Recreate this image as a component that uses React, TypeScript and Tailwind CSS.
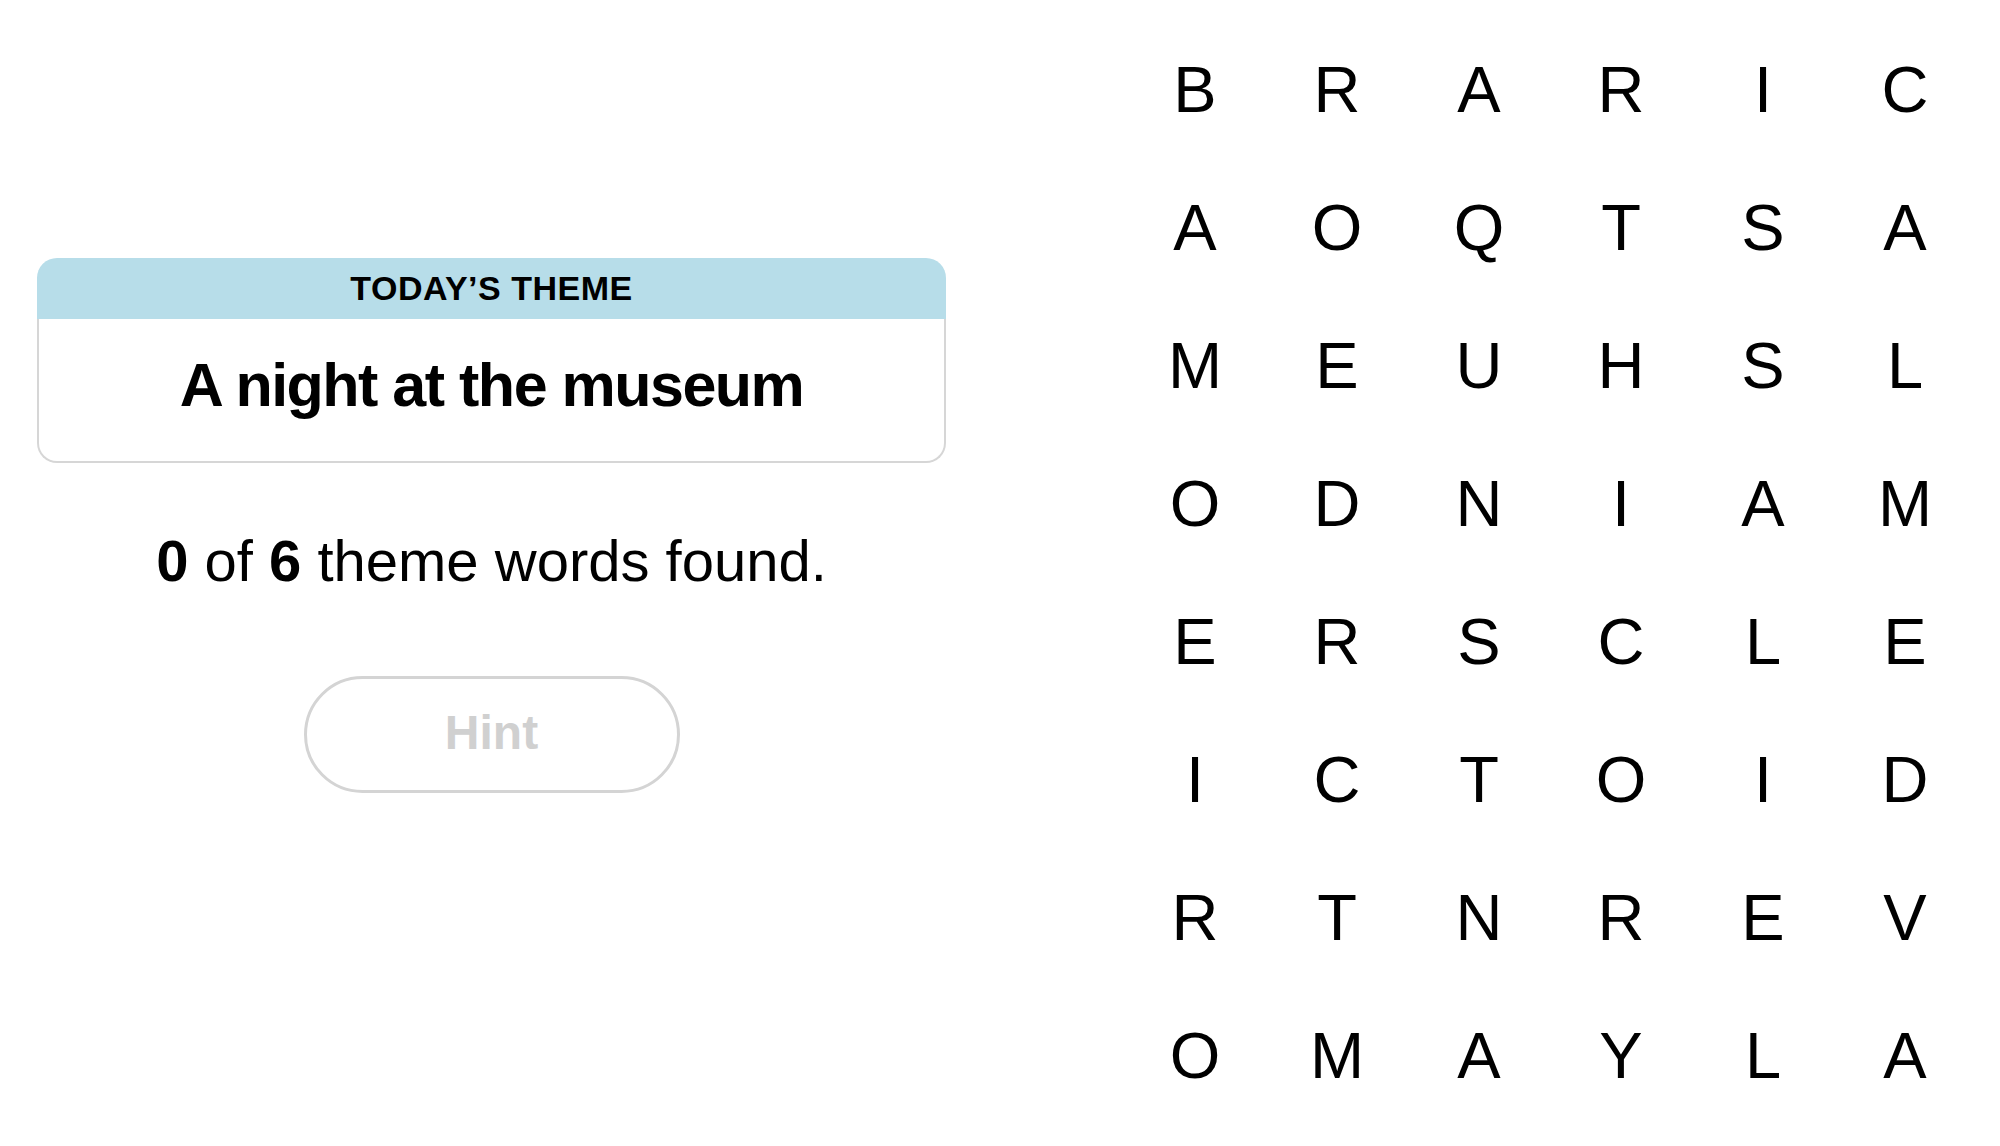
const board = [
  ['B', 'R', 'A', 'R', 'I', 'C'],
  ['A', 'O', 'Q', 'T', 'S', 'A'],
  ['M', 'E', 'U', 'H', 'S', 'L'],
  ['O', 'D', 'N', 'I', 'A', 'M'],
  ['E', 'R', 'S', 'C', 'L', 'E'],
  ['I', 'C', 'T', 'O', 'I', 'D'],
  ['R', 'T', 'N', 'R', 'E', 'V'],
  ['O', 'M', 'A', 'Y', 'L', 'A'],
]

function ThemeCard() {
  return (
    <div className="w-[909px]">
      <div className="flex h-[61px] items-center justify-center rounded-t-[20px] bg-[#b7dde9]">
        <span className="text-[34px] font-bold tracking-[0.5px] text-black">TODAY’S THEME</span>
      </div>
      <div className="flex h-[144px] items-center justify-center rounded-b-[20px] border-x-2 border-b-2 border-[#d6d6d6] bg-white pb-[10px]">
        <span className="text-[61px] font-bold leading-none tracking-[-1.5px] text-black">
          A night at the museum
        </span>
      </div>
    </div>
  )
}

export default function App() {
  return (
    <div
      className="flex h-[1146px] w-[2000px] bg-white text-black"
      style={{ fontFamily: '"Liberation Sans", Arial, sans-serif' }}
    >
      <section className="flex w-[983px] flex-col items-center px-[37px] pt-[258px]">
        <ThemeCard />
        <p className="mt-[69px] text-[58px] leading-[58px]">
          <b>0</b> of <b>6</b> theme words found.
        </p>
        <button className="mt-[86px] flex h-[117px] w-[376px] items-center justify-center rounded-full border-[3px] border-[#d4d4d4] bg-white pb-[4px] text-[48px] font-bold text-[#d0d0d0]">
          Hint
        </button>
      </section>

      <section className="ml-[141px] pt-[20px]">
        <div className="grid grid-cols-[repeat(6,142px)] grid-rows-[repeat(8,138px)]">
          {board.flatMap((row, r) =>
            row.map((ch, c) => (
              <div key={`${r}-${c}`} className="flex items-center justify-center text-[65px] leading-none">
                {ch}
              </div>
            )),
          )}
        </div>
      </section>
    </div>
  )
}
